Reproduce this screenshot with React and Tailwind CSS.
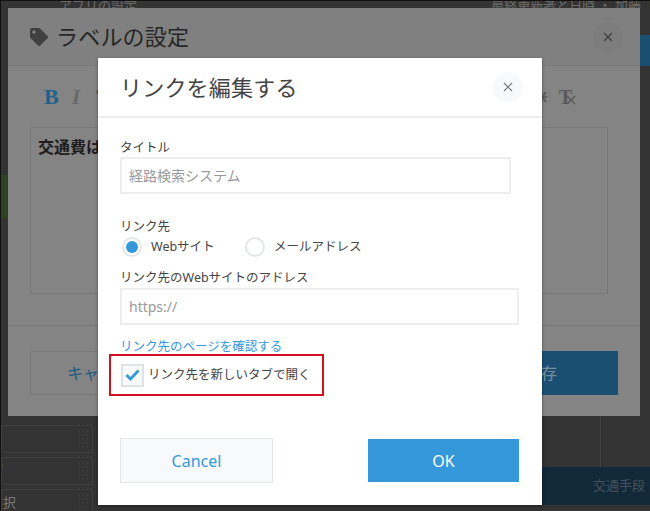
import React from "react";
import { FaTag } from "react-icons/fa";

const font = { fontFamily: '"Noto Sans", "Noto Sans CJK JP", sans-serif' };

const CloseIcon = ({ color }) => (
    <svg width="10" height="10" viewBox="0 0 10 10" fill="none" stroke={color} strokeWidth="1.1">
        <path d="M1 1 L9 9 M9 1 L1 9" />
    </svg>
);

const DragDots = () => (
    <svg width="10" height="18" viewBox="0 0 10 18" fill="#464646">
        {[1, 5, 9, 13, 17].map((y) =>
            [1, 5, 9].map((x) => <circle key={`${x}-${y}`} cx={x} cy={y} r="0.7" />)
        )}
    </svg>
);

const Field = ({ label, placeholder, width, labelLeading }) => (
    <div>
        <p className={`h-[20px] text-[12.5px] text-[#444] ${labelLeading}`}>{label}</p>
        <div className={`h-[37px] flex items-center pl-[7px] border-2 border-[#eceef0] text-[14px] text-[#999] ${width}`}>
            {placeholder}
        </div>
    </div>
);

const BackRow = ({ text }) => (
    <div className="h-[28px] shrink-0 mb-1 flex items-center justify-between border border-[#3e3e3e] pr-1 overflow-hidden">
        <span className="text-[13px] text-[#7a7a7a] -ml-[12px]">{text}</span>
        <DragDots />
    </div>
);

export default function App() {
    return (
        <div className="relative w-[650px] h-[511px] overflow-hidden bg-[#333] border-t border-l border-[#111]" style={font}>
            {/* page behind the dialogs */}
            <div className="flex flex-col h-full">
                <div className="h-[8px] shrink-0 flex justify-between overflow-hidden pl-[58px] pr-[9px] text-[13px] leading-[8px] text-[#6b6b6b]">
                    <span>アプリの設定</span>
                    <span>最終更新者と日時 ・ 加藤</span>
                </div>
                <div className="flex flex-1 min-h-0">
                    <div className="w-[92px] flex flex-col">
                        <div className="h-[166px] shrink-0" />
                        <div className="w-[8px] h-[43px] shrink-0 bg-[#2c4420]" />
                        <div className="h-[207px] shrink-0" />
                        <BackRow text="" />
                        <BackRow text="プ" />
                        <BackRow text="選択" />
                    </div>
                    <div className="flex-1 flex flex-col justify-end">
                        <div className="ml-auto w-[50px] h-[51px] border-l border-[#3e3e3e]" />
                        <div className="ml-auto w-[108px] h-[38px] mb-[6px] flex items-center justify-end pr-[5px] bg-[#12293a] text-[13px] text-[#44525c]">
                            交通手段
                        </div>
                    </div>
                </div>
            </div>

            {/* side tab peeking out to the right of the first dialog */}
            <div className="absolute left-[639px] top-[34px] w-[11px] h-[31px] bg-[#1b4f72]" />

            {/* first dialog, dimmed */}
            <div className="absolute left-[7px] top-[7px] w-[632px] h-[408px] bg-[#848484] flex flex-col">
                <div className="h-[58px] shrink-0 flex items-center justify-between pl-[22px] pr-[17px] border-b border-[#797979] bg-[#808080]">
                    <div className="flex items-center gap-[8px]">
                        <FaTag size={18} color="#404040" />
                        <span className="text-[22px] tracking-[0.2px] text-[#262626]">ラベルの設定</span>
                    </div>
                    <div className="w-[30px] h-[30px] rounded-full bg-[#7d7d7d] flex items-center justify-center">
                        <CloseIcon color="#3a3a3a" />
                    </div>
                </div>
                <div className="h-[61px] shrink-0 flex items-center justify-between pl-[36px] pr-[68px]">
                    <div className="flex items-center gap-[13px] text-[22px] font-['Liberation_Serif']">
                        <span className="font-bold text-[#21628d]">B</span>
                        <span className="italic font-bold text-[#6a6a6a]">I</span>
                        <span className="ml-[3px] font-bold text-[#555]">T</span>
                    </div>
                    <div className="flex items-center gap-[11px]">
                        <svg width="9" height="12" viewBox="0 0 9 12" fill="none" stroke="#555" strokeWidth="1.6">
                            <path d="M1 2 L4 2 M1 6 L8 6 M1 10 L4 10 M7 1 L4 5 M7 11 L4 7" />
                        </svg>
                        <span className="relative text-[20px] leading-none font-bold font-['Liberation_Serif'] text-[#5a5a5a]">
                            T
                            <span className="absolute left-[7px] top-[8px]">
                                <CloseIcon color="#555" />
                            </span>
                        </span>
                    </div>
                </div>
                <div className="mx-[22px] w-[578px] h-[167px] shrink-0 border border-[#777] p-[7px] text-[16px] font-bold text-[#1d1d1d]">
                    交通費は
                </div>
                <div className="mt-[31px] border-t border-[#777] pt-[25px] px-[22px] flex justify-between pr-[22px]">
                    <div className="w-[154px] h-[44px] border border-[#777] flex items-center justify-center text-[16px] text-[#1f5a80]">
                        キャンセル
                    </div>
                    <div className="w-[154px] h-[44px] bg-[#1b4f72] flex items-center justify-center text-[16px] text-[#7b8e9b]">
                        保存
                    </div>
                </div>
            </div>

            {/* link dialog */}
            <div className="absolute left-[97px] top-[57px] w-[444px] h-[447px] bg-white flex flex-col shadow-[0_1px_3px_rgba(0,0,0,0.4)]">
                <div className="h-[60px] shrink-0 flex items-center justify-between pl-[22px] pr-[19px] border-b-2 border-[#eceef0]">
                    <h1 className="text-[22px] tracking-[0.2px] text-[#444]">リンクを編集する</h1>
                    <button className="w-[30px] h-[30px] rounded-full bg-[#f7f9fa] flex items-center justify-center">
                        <CloseIcon color="#777" />
                    </button>
                </div>

                <div className="pl-[22px] pt-[19px] flex flex-col">
                    <Field label="タイトル" placeholder="経路検索システム" width="w-[391px]" labelLeading="leading-[22px]" />

                    <p className="mt-[22px] h-[18px] text-[12.5px] leading-[22px] text-[#444]">リンク先</p>
                    <div className="flex items-center h-[22px] mt-[2px] -mb-px text-[#444]">
                        <span className="w-[20px] h-[20px] ml-[2px] rounded-full border-2 border-[#e3e7e8] flex items-center justify-center">
                            <span className="w-[12px] h-[12px] rounded-full bg-[#3498db]" />
                        </span>
                        <span className="ml-[9px] w-[94px] text-[12.5px]">Webサイト</span>
                        <span className="w-[20px] h-[20px] rounded-full border-2 border-[#e3e7e8]" />
                        <span className="ml-[9px] text-[12.5px]">メールアドレス</span>
                    </div>

                    <div className="mt-[11px]">
                        <Field label="リンク先のWebサイトのアドレス" placeholder="https://" width="w-[399px]" labelLeading="leading-[20px]" />
                    </div>

                    <a className="mt-[11px] h-[18px] text-[12.5px] leading-[22px] text-[#3498db]">リンク先のページを確認する</a>

                    {/* annotation box around the checkbox */}
                    <div className="-ml-[11px] w-[215px] h-[42px] border-2 border-[#d0121b] flex items-center pl-[10px]">
                        <span className="w-[23px] h-[23px] border-2 border-[#dfe3e5] bg-[#f7f9fa] flex items-center justify-center">
                            <svg width="15" height="12" viewBox="0 0 15 12" fill="none" stroke="#3498db" strokeWidth="2.8">
                                <path d="M1.5 6 L5.5 10 L13.5 1.5" />
                            </svg>
                        </span>
                        <span className="ml-[4px] text-[12.5px] text-[#444]">リンク先を新しいタブで開く</span>
                    </div>

                    <div className="mt-[42px] w-[399px] flex justify-between items-center">
                        <button className="w-[153px] h-[45px] bg-[#f7f9fa] border border-[#e3e7e8] text-[16px] text-[#3498db]">
                            Cancel
                        </button>
                        <button className="w-[151px] h-[43px] bg-[#3498db] text-[16px] text-white">OK</button>
                    </div>
                </div>
            </div>
        </div>
    );
}
